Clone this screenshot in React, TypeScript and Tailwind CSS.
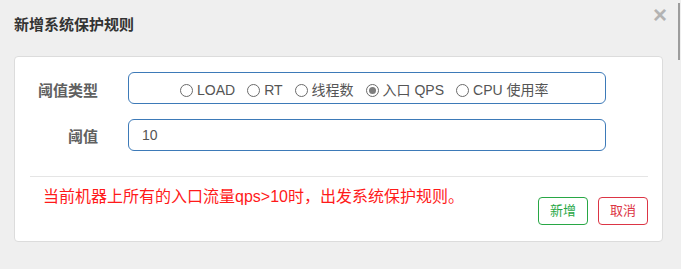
import React, { useState } from "react";

const options = [
  { value: "load", label: "LOAD" },
  { value: "rt", label: "RT" },
  { value: "thread", label: "线程数" },
  { value: "qps", label: "入口 QPS" },
  { value: "cpu", label: "CPU 使用率" },
];

function Radio({ checked }: { checked: boolean }) {
  return (
    <span className="flex h-[13px] w-[13px] items-center justify-center rounded-full border border-[#6b6b6b] bg-white">
      {checked && <span className="h-[7px] w-[7px] rounded-full bg-[#7d7d7d]" />}
    </span>
  );
}

export default function App() {
  const [grade, setGrade] = useState("qps");
  const [count, setCount] = useState("10");

  return (
    <div className="relative h-[269px] w-[681px] overflow-hidden bg-[#efefef] px-[14px] font-['Liberation_Sans','Noto_Sans_CJK_SC',sans-serif]">
      {/* header */}
      <div className="flex h-[56px] items-start justify-between pt-[15px]">
        <h4 className="text-[15px] font-bold leading-[20px] text-[#333]">新增系统保护规则</h4>
        <button className="-mt-[12px] text-[24px] font-bold leading-[24px] text-[#b3b3b3]">×</button>
      </div>

      {/* body */}
      <div className="h-[186px] w-[649px] rounded-[4px] border border-[#dcdcdc] bg-white">
        <div className="flex items-center pt-[15px]">
          <label className="w-[83px] pt-[5px] text-right text-[15px] font-bold leading-[20px] text-[#606060]">阈值类型</label>
          <div className="ml-[30px] flex h-[32px] w-[478px] items-center gap-[12px] rounded-[6px] border border-[#3d7ab8] pl-[51px] pt-[4px]">
            {options.map((o) => (
              <label
                key={o.value}
                onClick={() => setGrade(o.value)}
                className="flex cursor-pointer items-center text-[14px] leading-[20px] text-[#555]"
              >
                <Radio checked={grade === o.value} />
                <span className="ml-[4px]">{o.label}</span>
              </label>
            ))}
          </div>
        </div>

        <div className="mt-[15px] flex items-center">
          <label className="w-[83px] pt-[4px] text-right text-[15px] font-bold leading-[20px] text-[#606060]">阈值</label>
          <input
            value={count}
            onChange={(e) => setCount(e.target.value)}
            className="ml-[30px] h-[32px] w-[478px] rounded-[6px] border border-[#3d7ab8] px-[13px] text-[14px] text-[#555] outline-none"
          />
        </div>

        <div className="ml-[15px] mt-[25px] w-[618px] border-t border-[#e5e5e5]">
          <div className="flex items-start justify-between">
            <p className="mt-[9px] pl-[13px] text-[16px] leading-[22px] text-[#ff1a1a]">
              当前机器上所有的入口流量qps&gt;10时，出发系统保护规则。
            </p>
            <div className="mt-[20px] flex gap-[10px]">
              <button className="h-[28px] w-[50px] rounded-[4px] border border-[#28a745] text-[13px] text-[#28a745]">
                新增
              </button>
              <button className="h-[28px] w-[50px] rounded-[4px] border border-[#dc3545] text-[13px] text-[#dc3545]">
                取消
              </button>
            </div>
          </div>
        </div>
      </div>

      {/* scrollbar thumb */}
      <div className="absolute right-[1px] top-[3px] h-[57px] w-[2px] bg-[#9c9c9c]" />
    </div>
  );
}
